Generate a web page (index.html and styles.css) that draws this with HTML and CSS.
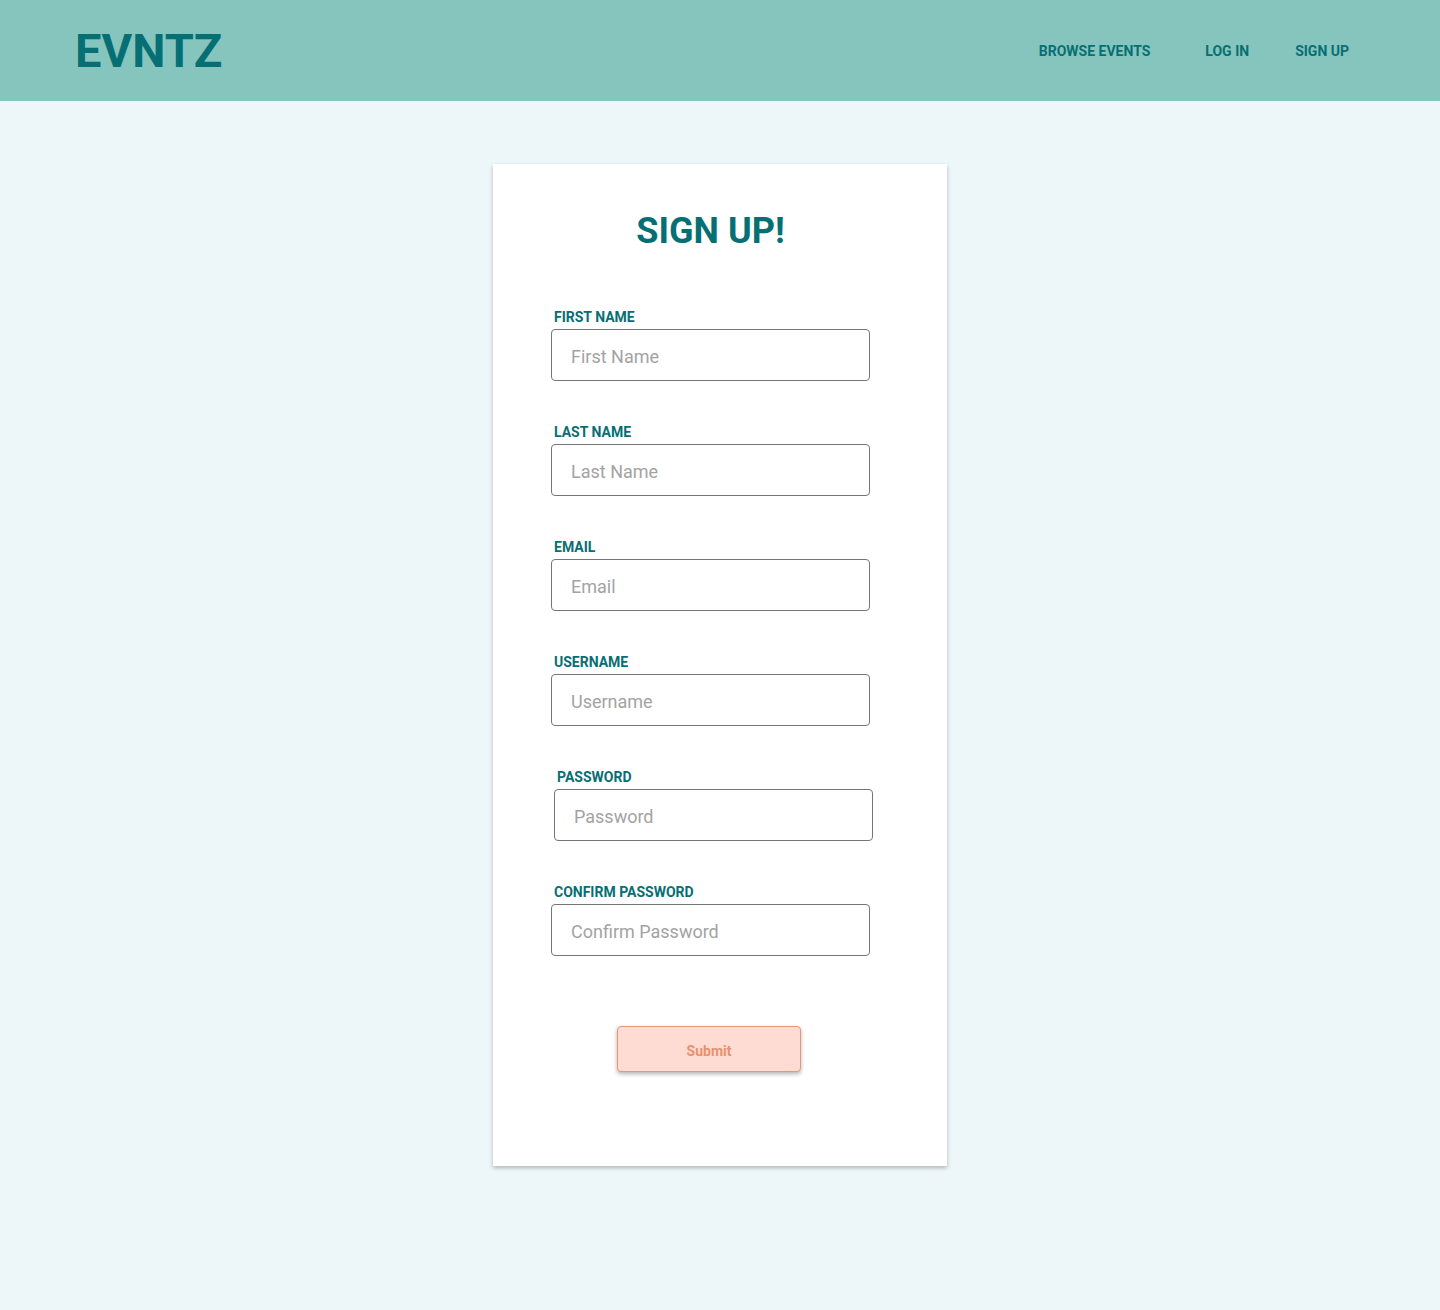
FILE: index.html
```html
<!DOCTYPE html>
<html lang="en">
<head>
<meta charset="utf-8">
<title>EVNTZ - Sign Up</title>
<link rel="stylesheet" href="styles.css">
</head>
<body>
<header class="topbar">
  <div class="logo">EVNTZ</div>
  <nav class="nav">
    <a class="nav-link nav-browse" href="#">BROWSE EVENTS</a>
    <a class="nav-link nav-login" href="#">LOG IN</a>
    <a class="nav-link" href="#">SIGN UP</a>
  </nav>
</header>
<main class="page">
  <section class="card">
    <h1 class="title">SIGN UP!</h1>
    <form class="form">
      <div class="field">
        <label class="label">FIRST NAME</label>
        <input class="input" type="text" placeholder="First Name">
      </div>
      <div class="field">
        <label class="label">LAST NAME</label>
        <input class="input" type="text" placeholder="Last Name">
      </div>
      <div class="field">
        <label class="label">EMAIL</label>
        <input class="input" type="text" placeholder="Email">
      </div>
      <div class="field">
        <label class="label">USERNAME</label>
        <input class="input" type="text" placeholder="Username">
      </div>
      <div class="field field-shift">
        <label class="label">PASSWORD</label>
        <input class="input" type="password" placeholder="Password">
      </div>
      <div class="field">
        <label class="label">CONFIRM PASSWORD</label>
        <input class="input" type="password" placeholder="Confirm Password">
      </div>
      <div class="actions">
        <button class="submit" type="button">Submit</button>
      </div>
    </form>
  </section>
</main>
</body>
</html>
```
FILE: styles.css
```css
* { box-sizing: border-box; }
html, body {
  margin: 0;
  padding: 0;
}
body {
  font-family: Roboto, "Liberation Sans", Arial, sans-serif;
  background: #edf6f8;
  color: #066f74;
  min-height: 1310px;
}
.topbar {
  height: 101px;
  background: #86c5be;
  display: flex;
  align-items: center;
  justify-content: space-between;
  padding: 0 91px 0 75px;
}
.logo {
  font-size: 47px;
  font-weight: 700;
  color: #066f74;
  line-height: 1;
}
.nav {
  display: flex;
  align-items: center;
}
.nav-link {
  font-size: 14px;
  font-weight: 700;
  color: #066f74;
  text-decoration: none;
  line-height: 16px;
}
.nav-browse { margin-right: 55px; }
.nav-login { margin-right: 46px; }
.page {
  padding-top: 63px;
  padding-bottom: 144px;
  display: flex;
  justify-content: center;
}
.card {
  width: 454px;
  background: #fff;
  padding: 46px 77px 94px 58px;
  box-shadow: 0 2px 4px rgba(0, 0, 0, 0.25);
}
.title {
  margin: 0;
  text-align: center;
  font-size: 36px;
  font-weight: 700;
  line-height: 42px;
  color: #066f74;
}
.form {
  margin-top: 57px;
  display: flex;
  flex-direction: column;
  gap: 43px;
}
.field {
  display: flex;
  flex-direction: column;
  gap: 3px;
}
.field-shift { margin-left: 3px; margin-right: -3px; }
.label {
  font-size: 14px;
  font-weight: 700;
  line-height: 17px;
  padding-left: 3px;
  color: #066f74;
}
.input {
  width: 319px;
  height: 52px;
  border: 1px solid #767676;
  border-radius: 4px;
  padding: 2px 19px 0;
  font-family: Roboto, "Liberation Sans", Arial, sans-serif;
  font-size: 18px;
  color: #333;
  background: #fff;
  outline: none;
}
.input::placeholder { color: #a3a3a3; }
.actions {
  margin-top: 27px;
  display: flex;
  justify-content: center;
}
.submit {
  width: 184px;
  height: 46px;
  margin-left: -3px;
  background: #ffdcd3;
  border: 1px solid #e8967a;
  border-radius: 4px;
  color: #e8906f;
  font-family: Roboto, "Liberation Sans", Arial, sans-serif;
  font-size: 14px;
  font-weight: 700;
  padding-top: 4px;
  box-shadow: 0 2px 4px rgba(0, 0, 0, 0.3);
}
```
